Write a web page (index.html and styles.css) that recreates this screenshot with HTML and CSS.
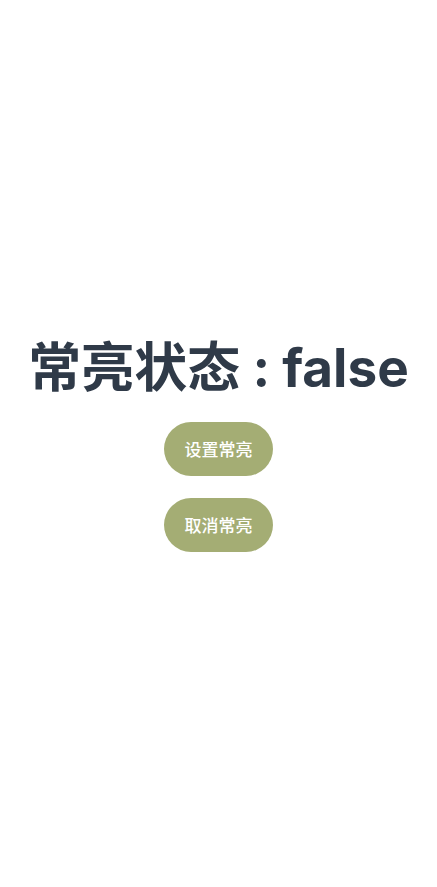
FILE: index.html
```
<!DOCTYPE html>
<html lang="zh">
<head>
<meta charset="utf-8">
<link rel="stylesheet" href="styles.css">
</head>
<body>
<main class="page">
  <h1 class="title">常亮状态<span class="colon">:</span>false</h1>
  <button class="btn">设置常亮</button>
  <button class="btn">取消常亮</button>
</main>
</body>
</html>
```
FILE: styles.css
```
html, body {
  margin: 0;
  padding: 0;
  background: #ffffff;
}
.page {
  height: 887px;
  display: flex;
  flex-direction: column;
  align-items: center;
  justify-content: center;
  font-family: "Noto Sans", "Noto Sans CJK SC", sans-serif;
}
.title {
  margin: 0 0 22px 0;
  font-family: "Inter", "Noto Sans CJK SC", sans-serif;
  font-size: 53px;
  line-height: 64px;
  font-weight: 700;
  color: #2f3a48;
  white-space: nowrap;
}
.colon {
  display: inline-block;
  width: 42px;
  text-align: center;
}
.btn {
  width: 109px;
  height: 54px;
  border: none;
  border-radius: 27px;
  background: #a4ad74;
  color: #ffffff;
  font-family: "Noto Sans CJK SC", sans-serif;
  font-size: 17px;
  font-weight: 500;
  padding: 0;
  margin: 0 0 22px 0;
}
.btn:last-child { margin-bottom: 0; }
```
